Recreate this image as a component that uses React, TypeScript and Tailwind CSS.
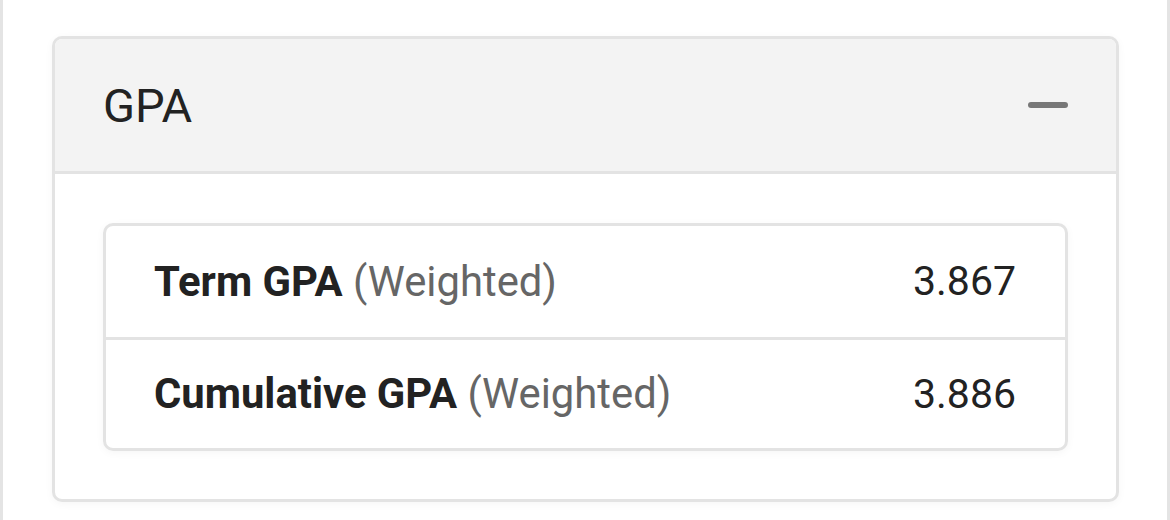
import { useState } from "react";

interface GpaRow {
  label: string;
  note: string;
  value: string;
}

const rows: GpaRow[] = [
  { label: "Term GPA", note: "(Weighted)", value: "3.867" },
  { label: "Cumulative GPA", note: "(Weighted)", value: "3.886" },
];

export default function App() {
  const [open, setOpen] = useState(true);

  return (
    <main
      className="min-h-[520px] bg-white border-x-[3px] border-[#e4e4e4] pl-[49px] pr-[48px] pt-[36px] text-[#222]"
      style={{ fontFamily: "Roboto, 'Liberation Sans', sans-serif" }}
    >
      {/* GPA card */}
      <section className="rounded-[10px] border-[3px] border-[#e3e3e3] bg-white overflow-hidden shadow-[0_2px_8px_rgba(0,0,0,0.04)]">
        <button
          type="button"
          onClick={() => setOpen(!open)}
          className="flex h-[135px] w-full items-center justify-between border-b-[3px] border-[#e3e3e3] bg-[#f3f3f3] pl-[48px] pr-[48px] text-left"
        >
          <h2 className="text-[47px] font-normal leading-none text-[#222]">GPA</h2>
          <span className="block h-[6px] w-[40px] rounded-full bg-[#777]" />
        </button>

        {open && (
          <div className="px-[48px] pt-[49px] pb-[48px]">
            <ul className="rounded-[10px] border-[3px] border-[#e3e3e3] shadow-[0_2px_8px_rgba(0,0,0,0.04)]">
              {rows.map((row, i) => (
                <li
                  key={row.label}
                  className={
                    "flex h-[111px] items-center justify-between pl-[48px] pr-[49px] leading-none " +
                    (i > 0 ? "border-t-[3px] border-[#e3e3e3]" : "")
                  }
                >
                  <span className="text-[41.8px]">
                    <span className="font-bold text-[#222]">{row.label}</span>{" "}
                    <span className="text-[#666]">{row.note}</span>
                  </span>
                  <span className="text-[41px] text-[#222]">{row.value}</span>
                </li>
              ))}
            </ul>
          </div>
        )}
      </section>
    </main>
  );
}
